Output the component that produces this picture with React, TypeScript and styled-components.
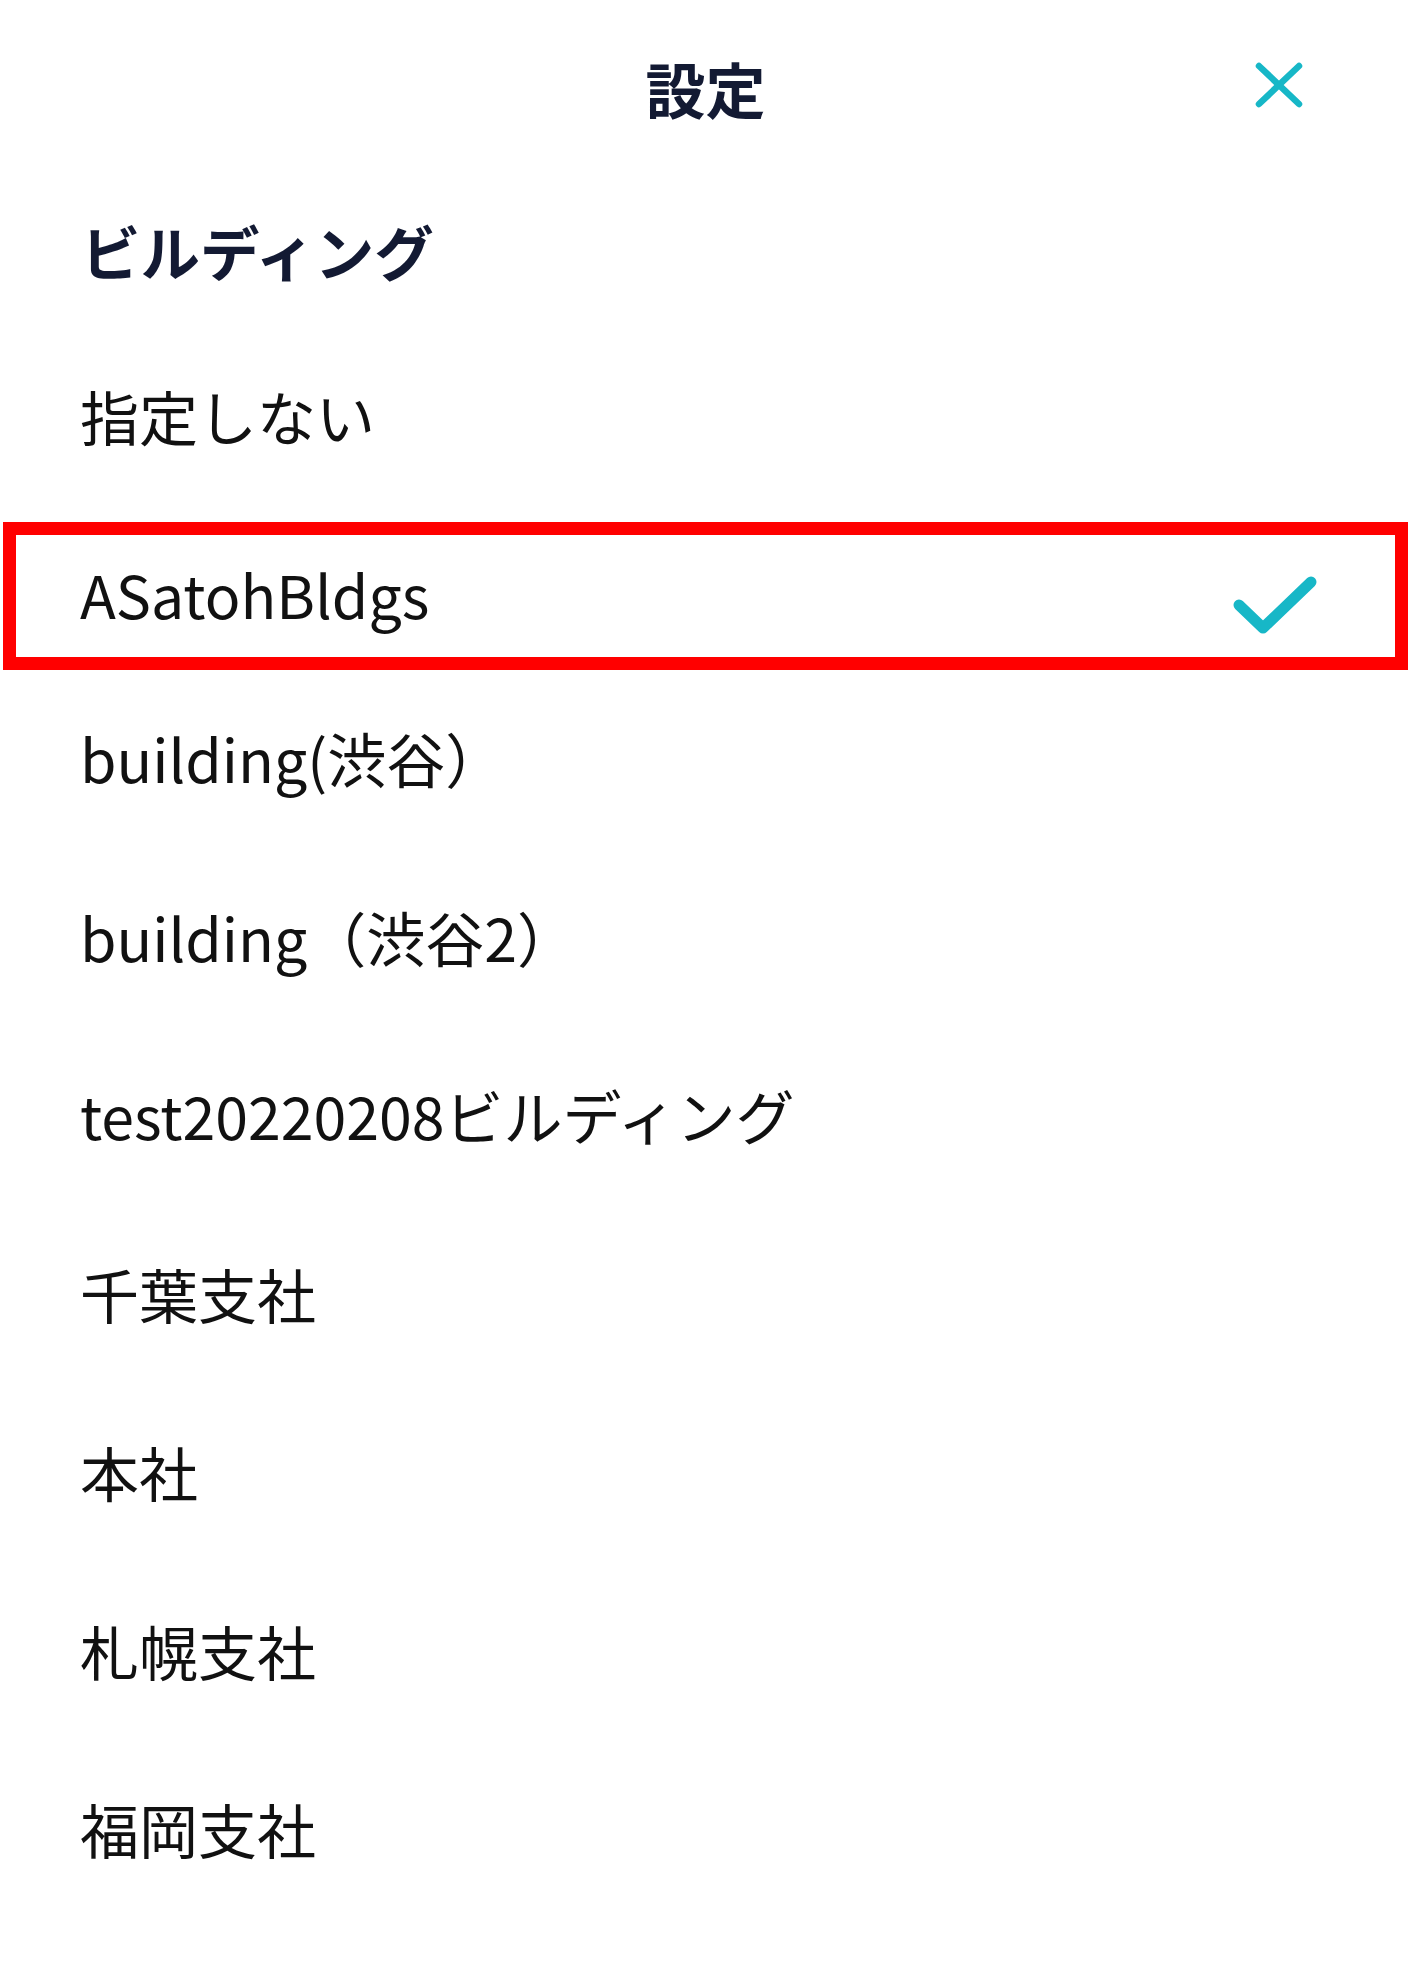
import React from 'react';
import styled, { createGlobalStyle } from 'styled-components';

const GlobalStyle = createGlobalStyle`
  html, body {
    margin: 0;
    padding: 0;
    background: #fff;
  }
  body {
    font-family: 'Noto Sans CJK JP', 'Noto Sans', sans-serif;
  }
`;

export const Screen = styled.div`
  width: 1411px;
  min-height: 1970px;
  background: #fff;
  color: #111;
`;

export const Header = styled.header`
  display: grid;
  grid-template-columns: 1fr auto 1fr;
  align-items: center;
  height: 176px;
  padding: 0 108px;
  box-sizing: border-box;
`;

export const Title = styled.h1`
  grid-column: 2;
  margin: 0;
  font-size: 60px;
  line-height: 1;
  font-weight: 700;
  color: #131a33;
`;

export const CloseButton = styled.button`
  grid-column: 3;
  justify-self: end;
  display: flex;
  padding: 0;
  margin-top: -6px;
  border: none;
  background: none;
  cursor: pointer;
`;

export const SectionTitle = styled.h2`
  display: flex;
  align-items: center;
  height: 150px;
  margin: 0;
  padding-left: 81px;
  font-size: 59.5px;
  line-height: 1;
  font-weight: 700;
  color: #131a33;
`;

export const OptionList = styled.ul`
  list-style: none;
  margin: 0;
  padding: 0;
`;

export const Option = styled.li<{ $selected?: boolean }>`
  position: relative;
  display: flex;
  align-items: center;
  justify-content: space-between;
  height: ${(p) => (p.$selected ? '164px' : '178.5px')};
  padding: ${(p) => (p.$selected ? '14px' : '0')} 94px 0 80px;
  box-sizing: border-box;
  font-size: 59px;
  line-height: 1;
  font-weight: 400;
  color: #111;

  ${(p) =>
    p.$selected &&
    `
    &::after {
      content: '';
      position: absolute;
      top: 17.5px;
      bottom: -1.5px;
      left: 3px;
      right: 3px;
      border: 13px solid #ff0000;
      pointer-events: none;
    }
  `}
`;

export const Check = styled.svg`
  flex: none;
  margin-top: 24px;
`;

const TEAL = '#17b7c7';

const options = [
  '指定しない',
  'ASatohBldgs',
  'building(渋谷）',
  'building（渋谷2）',
  'test20220208ビルディング',
  '千葉支社',
  '本社',
  '札幌支社',
  '福岡支社',
];

const selected = 'ASatohBldgs';

const App: React.FC = () => {
  return (
    <Screen>
      <GlobalStyle />
      <Header>
        <Title>設定</Title>
        <CloseButton aria-label="閉じる">
          <svg width="48" height="46" viewBox="0 0 48 46">
            <path
              d="M4 4 L44 42 M44 4 L4 42"
              stroke={TEAL}
              strokeWidth="6.5"
              strokeLinecap="round"
              fill="none"
            />
          </svg>
        </CloseButton>
      </Header>
      <SectionTitle>ビルディング</SectionTitle>
      <OptionList>
        {options.map((name) => (
          <Option key={name} $selected={name === selected}>
            <span>{name}</span>
            {name === selected && (
              <Check width="84" height="61" viewBox="0 0 84 61">
                <path
                  d="M6 30 L30 53 L78 7"
                  stroke={TEAL}
                  strokeWidth="11"
                  strokeLinecap="round"
                  strokeLinejoin="round"
                  fill="none"
                />
              </Check>
            )}
          </Option>
        ))}
      </OptionList>
    </Screen>
  );
};

export default App;
